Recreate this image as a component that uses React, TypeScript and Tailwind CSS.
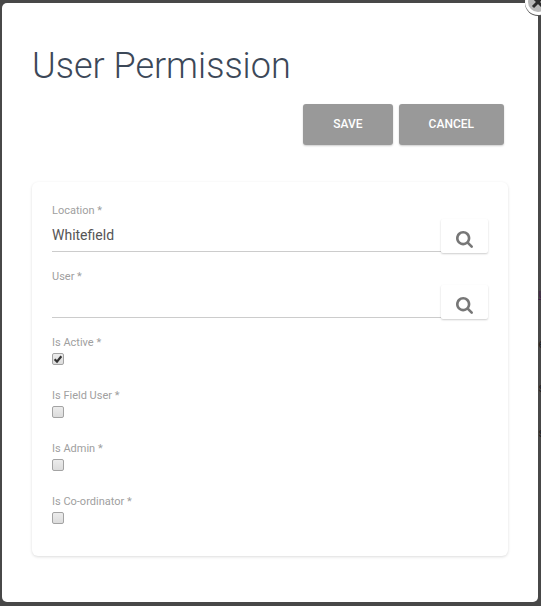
import { useState } from "react";

function SearchIcon() {
  return (
    <svg viewBox="0 128 1664 1664" className="size-[17px]" fill="currentColor" aria-hidden="true">
      <path d="M1152 832q0-185-131.5-316.5t-316.5-131.5-316.5 131.5-131.5 316.5 131.5 316.5 316.5 131.5 316.5-131.5 131.5-316.5zm512 832q0 52-38 90t-90 38q-54 0-90-38l-343-342q-179 124-399 124-143 0-273.5-55.5t-225-150-150-225-55.5-273.5 55.5-273.5 150-225 225-150 273.5-55.5 273.5 55.5 225 150 150 225 55.5 273.5q0 220-124 399l343 343q37 37 37 90z" />
    </svg>
  );
}

function LookupField({ id, label, initial }: { id: string; label: string; initial: string }) {
  const [value, setValue] = useState(initial);
  return (
    <div className="mb-4">
      <label htmlFor={id} className="block text-[11px] leading-4 text-[#a0a0a0]">
        {label} *
      </label>
      <div className="flex items-start">
        <input
          id={id}
          type="text"
          value={value}
          onChange={(e) => setValue(e.target.value)}
          className="h-[33px] min-w-0 flex-1 border-b border-[#cccccc] bg-transparent text-sm text-[#555555] outline-none"
        />
        <button
          type="button"
          aria-label={`Search ${label}`}
          className="flex h-[34px] w-[47px] items-center justify-center rounded-xs bg-white pt-[6px] text-[#777777] shadow-[0_1px_2px_rgba(0,0,0,0.2)]"
        >
          <SearchIcon />
        </button>
      </div>
    </div>
  );
}

function CheckField({ id, label, initial = false }: { id: string; label: string; initial?: boolean }) {
  const [checked, setChecked] = useState(initial);
  return (
    <div className="h-[53px]">
      <label htmlFor={id} className="block text-[11px] leading-4 text-[#a0a0a0]">
        {label} *
      </label>
      <div className="relative mt-[2px] size-3">
        <input
          id={id}
          type="checkbox"
          checked={checked}
          onChange={(e) => setChecked(e.target.checked)}
          className="block size-3 appearance-none rounded-xs border border-[#a3a3a3] bg-linear-to-b from-[#ececec] to-[#dcdcdc]"
        />
        {checked && (
          <svg viewBox="0 0 12 12" className="pointer-events-none absolute inset-0 size-3" aria-hidden="true">
            <path d="M2.6 6.2 5 8.6 9.3 3.2" fill="none" stroke="#333333" strokeWidth="2.2" />
          </svg>
        )}
      </div>
    </div>
  );
}

const actionClass =
  "h-[41px] rounded-[3px] bg-[#999999] px-[30px] pb-[2px] text-xs font-medium text-white uppercase shadow-[0_1px_2px_rgba(0,0,0,0.2)]";

export default function App() {
  return (
    <div className="relative min-h-screen overflow-hidden bg-[#484848] pt-[3px] pr-[3px] pb-1 pl-[2px] font-[Roboto,sans-serif]">
      <div className="absolute top-[286px] -right-1 text-xs leading-4 text-[#221f22]" aria-hidden="true">
        <div className="text-[#421f48] underline">u</div>
        <div className="mt-[34px]">e</div>
        <div className="mt-7">s</div>
        <div className="mt-[29px]">s</div>
      </div>
      <main
        role="dialog"
        aria-labelledby="title"
        className="relative min-h-[599px] rounded-[5px] bg-white px-[30px] pt-10 pb-[46px]"
      >
        <h1 id="title" className="text-4xl leading-[46px] font-light text-[#3c4858]">
          User Permission
        </h1>
        <form onSubmit={(e) => e.preventDefault()}>
          <div className="mt-[15px] mr-1 flex justify-end gap-[6px]">
            <button type="submit" className={actionClass}>
              Save
            </button>
            <button type="button" className={actionClass}>
              Cancel
            </button>
          </div>
          <section className="mt-[37px] rounded-md bg-white px-5 pt-[21px] pb-[9px] shadow-[0_1px_3px_rgba(0,0,0,0.14)]">
            <LookupField id="location" label="Location" initial="Whitefield" />
            <LookupField id="user" label="User" initial="" />
            <CheckField id="active" label="Is Active" initial />
            <CheckField id="field-user" label="Is Field User" />
            <CheckField id="admin" label="Is Admin" />
            <CheckField id="coordinator" label="Is Co-ordinator" />
          </section>
        </form>
      </main>
      <button type="button" aria-label="Close" className="absolute -top-4 -right-[15px] size-9">
        <svg viewBox="0 0 36 36" className="size-9" aria-hidden="true">
          <circle cx="18" cy="19" r="13" fill="#555555" />
          <circle cx="18" cy="18" r="13" fill="#ffffff" />
          <circle cx="18" cy="18" r="10" fill="#b8b8b8" />
          <path d="M13 13 23 23M23 13 13 23" stroke="#2b2b2b" strokeWidth="3" />
        </svg>
      </button>
    </div>
  );
}
